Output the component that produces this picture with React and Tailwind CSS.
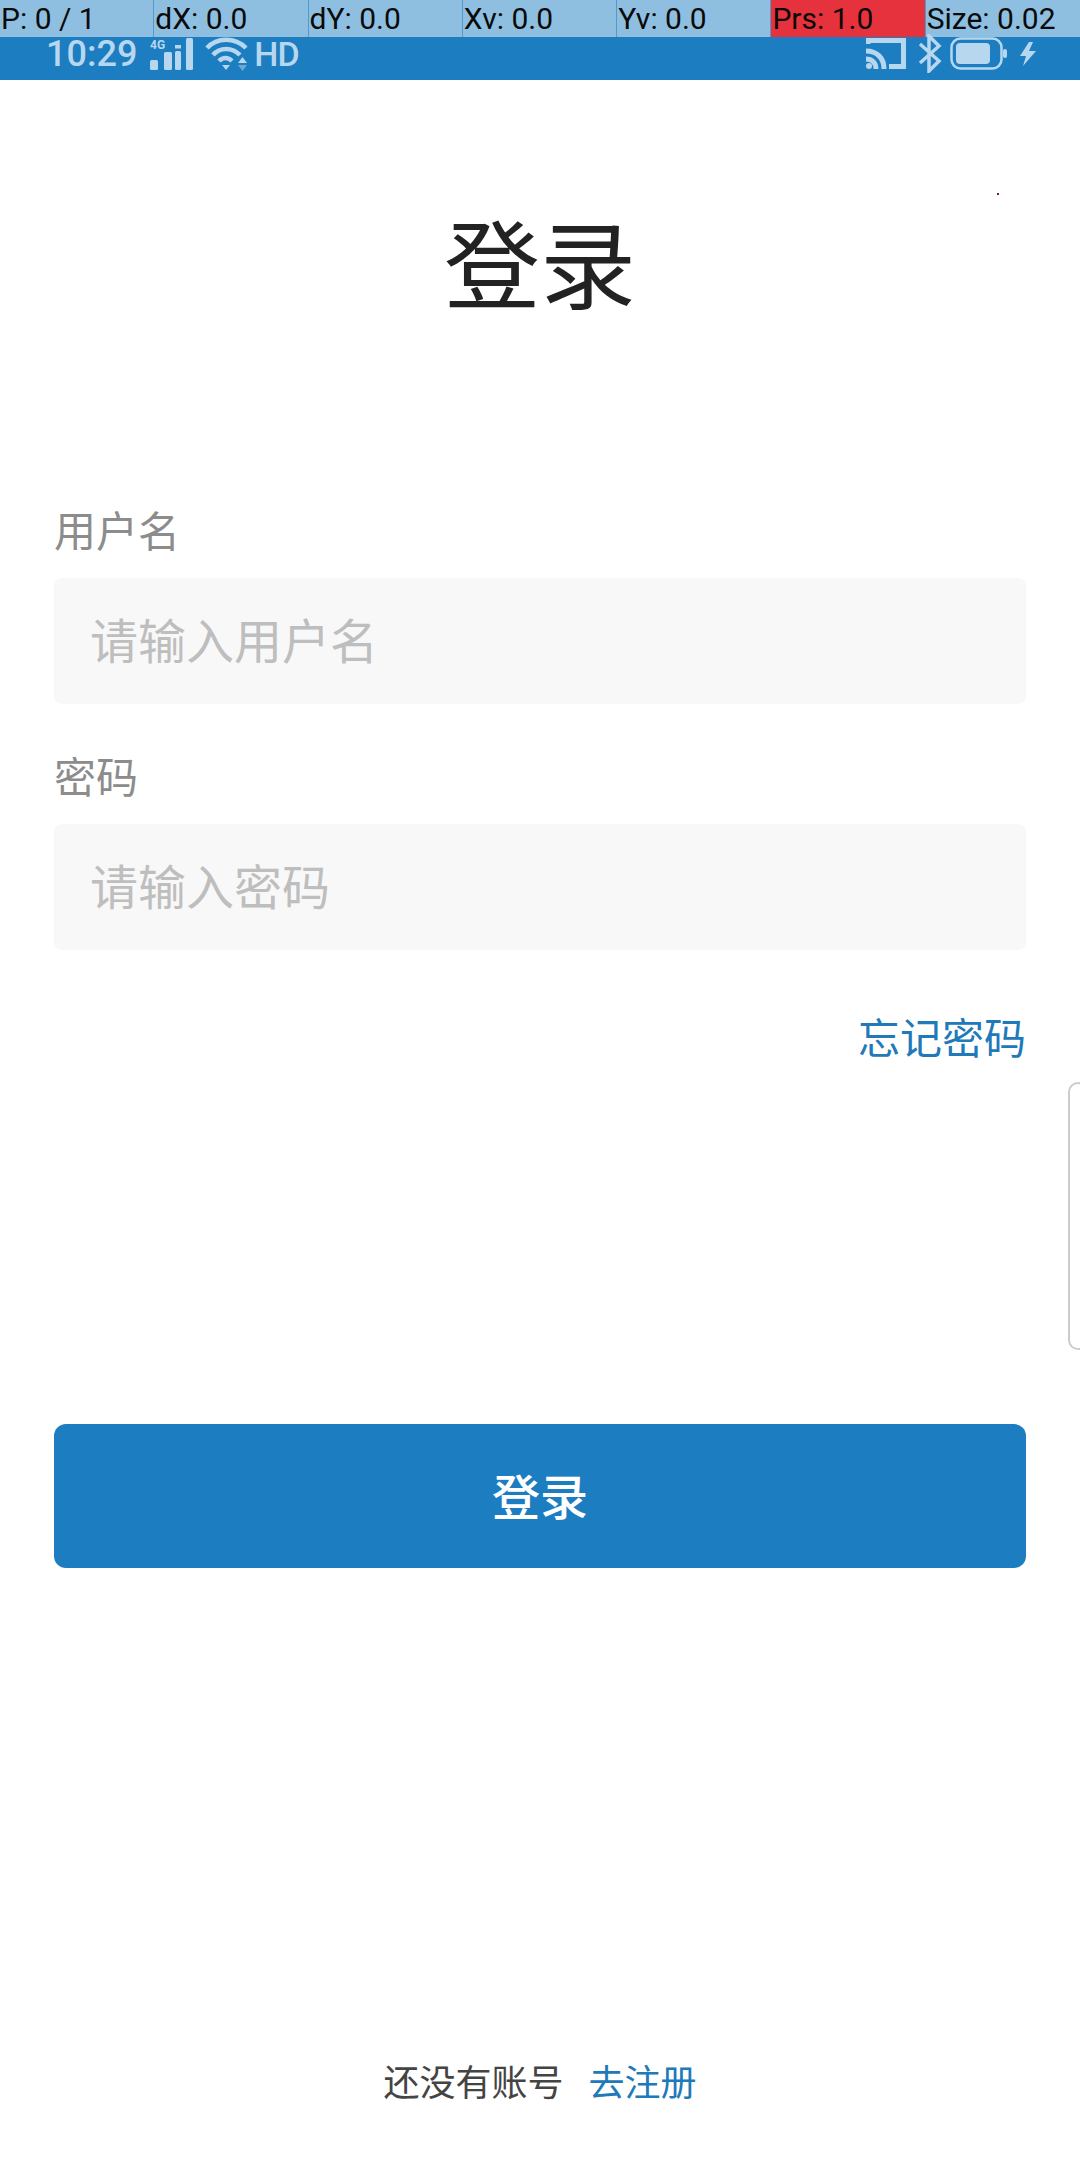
const cjk = { fontFamily: '"Noto Sans CJK SC", sans-serif' };
const roboto = { fontFamily: 'Roboto, sans-serif' };

function Cell({ children, className = '' }) {
  return (
    <div className={`w-[154.3px] h-full pl-[1px] border-r border-[#4f9ad0] text-[30px] leading-[37px] text-[#0a0a0a] whitespace-nowrap ${className}`}>
      {children}
    </div>
  );
}

function Field({ label, placeholder, top }) {
  return (
    <div className={`flex flex-col ${top}`}>
      <div className="text-[42px] leading-[60px] text-[#8c8c8c] h-[60px]">{label}</div>
      <div className="mt-[19px] h-[126px] bg-[#f8f8f8] rounded-[8px] pl-[36px] pb-[6px] flex items-center text-[48px] text-[#bebebe]">
        {placeholder}
      </div>
    </div>
  );
}

export default function App() {
  return (
    <div className="relative w-[1080px] h-[2160px] bg-white overflow-hidden" style={cjk}>
      <div className="flex h-[37px] bg-[#8fbfe0]" style={roboto}>
        <Cell>P: 0 / 1</Cell>
        <Cell>dX: 0.0</Cell>
        <Cell>dY: 0.0</Cell>
        <Cell>Xv: 0.0</Cell>
        <Cell>Yv: 0.0</Cell>
        <Cell className="bg-[#e6323c]">Prs: 1.0</Cell>
        <Cell className="border-r-0">Size: 0.02</Cell>
      </div>

      <div className="flex items-start justify-between h-[43px] bg-[#1c7dc1] text-[#b7d7ee]" style={roboto}>
        <div className="flex items-start">
          <span className="ml-[46px] text-[36px] font-medium leading-[38px] mt-[-2px]">10:29</span>
          <svg className="ml-[13px] mt-[1px]" width="44" height="32" viewBox="0 0 44 32" fill="currentColor">
            <rect x="0" y="22" width="8" height="10" rx="1.5" />
            <rect x="14" y="14" width="8" height="18" rx="1.5" />
            <rect x="25" y="7" width="6" height="3.5" />
            <rect x="25" y="13" width="6" height="19" rx="1.5" />
            <rect x="36" y="0" width="7" height="32" rx="1.5" />
            <text x="0" y="11" fontSize="12" fontWeight="700">4G</text>
          </svg>
          <svg className="ml-[11px]" width="44" height="34" viewBox="0 0 44 34" fill="none" stroke="currentColor" strokeWidth="4.5">
            <path d="M2 11 C12 0 30 0 41 11" />
            <path d="M8 18 C15 10 27 10 35 18" />
            <path d="M14 24 C18 20 23 20 27 24" />
            <path d="M17 28 L25 28 L21 33 Z" fill="currentColor" stroke="none" />
            <path d="M33 26 L42 26 L37.5 20 Z" fill="currentColor" stroke="none" />
            <path d="M33 28 L42 28 L37.5 34 Z" fill="#6ba9d6" stroke="none" />
          </svg>
          <span className="ml-[5px] text-[34px] font-medium leading-[38px] mt-[-2px] tracking-[-1px]">HD</span>
        </div>
        <div className="flex items-start mr-[44px]">
          <svg className="mt-[1px]" width="40" height="32" viewBox="0 0 40 32" fill="none" stroke="currentColor" strokeWidth="5">
            <path d="M2 6 V2.5 H37.5 V28.5 H23" />
            <path d="M0 13 C11 13 18 20 18 31" />
            <path d="M0 21 C6 21 10 25 10 31" />
            <circle cx="3" cy="28" r="3" fill="currentColor" stroke="none" />
          </svg>
          <svg className="ml-[12px] mt-[-3px]" width="24" height="39" viewBox="0 0 24 39" fill="none" stroke="currentColor" strokeWidth="3.5">
            <path d="M2 10 L21 27 L11 37 V2 L21 12 L2 29" />
          </svg>
          <svg className="ml-[8px]" width="58" height="34" viewBox="0 0 58 34" fill="none">
            <rect x="1.5" y="1.5" width="50" height="30" rx="9" stroke="currentColor" strokeWidth="2.5" />
            <rect x="6" y="6" width="34" height="21" rx="4" fill="currentColor" />
            <rect x="53" y="12" width="4" height="9" rx="2" fill="currentColor" />
          </svg>
          <svg className="ml-[12px] mt-[5px]" width="16" height="24" viewBox="0 0 16 24" fill="currentColor">
            <path d="M9 0 L0 14 H6 L3 24 L16 9 H9 L13 0 Z" />
          </svg>
        </div>
      </div>

      <div className="flex flex-col px-[54px]">
        <h1 className="mt-[120px] text-center text-[96px] leading-[120px] text-[#222222] font-normal">登录</h1>
        <Field top="mt-[179px]" label="用户名" placeholder="请输入用户名" />
        <Field top="mt-[41px]" label="密码" placeholder="请输入密码" />
        <div className="mt-[56px] h-[60px] text-right text-[42px] leading-[60px] text-[#2079b8]">忘记密码</div>
        <button className="mt-[358px] h-[144px] bg-[#1c7dc1] rounded-[12px] text-white text-[48px] font-medium pb-[4px]">登录</button>
        <div className="mt-[487px] h-[50px] flex justify-center items-center text-[36px] leading-[50px]">
          <span className="text-[#444444]">还没有账号</span>
          <span className="ml-[25px] text-[#2079b8]">去注册</span>
        </div>
      </div>

      <div className="absolute left-[997px] top-[193px] w-[2px] h-[2px] bg-[#7a2020]" />
      <div className="absolute left-[1068px] top-[1082px] w-[20px] h-[268px] border-2 border-[#cccccc] rounded-[14px] bg-white" />
    </div>
  );
}
